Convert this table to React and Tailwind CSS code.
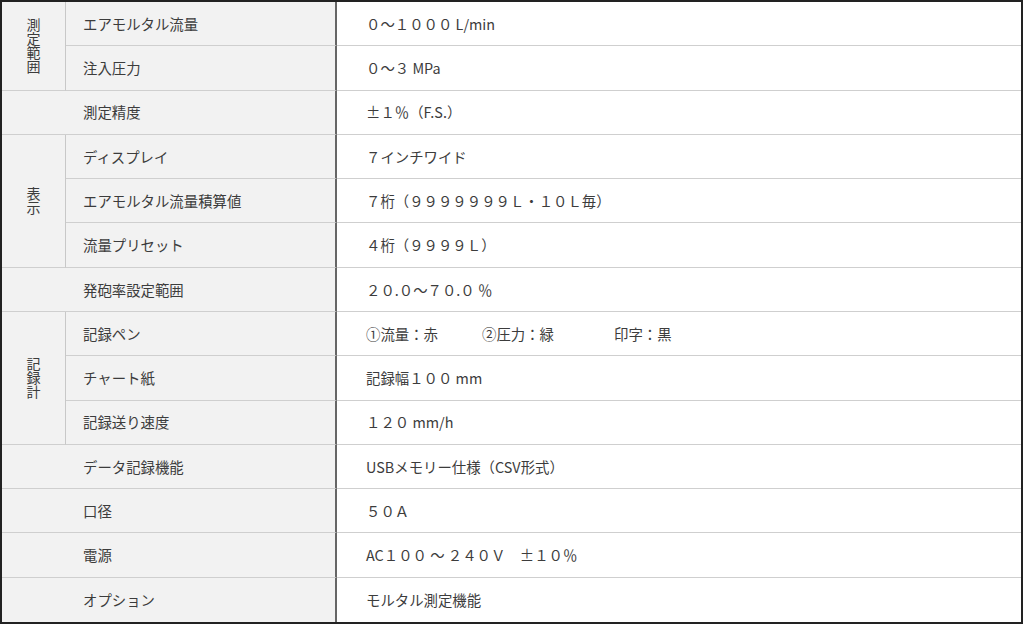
const rows = [
  { group: "測定範囲", span: 2, label: "エアモルタル流量", value: "０～１０００ L/min" },
  { label: "注入圧力", value: "０～３ MPa" },
  { label: "測定精度", value: "±１％（F.S.）", wide: true },
  { group: "表示", span: 3, label: "ディスプレイ", value: "７インチワイド" },
  { label: "エアモルタル流量積算値", value: "７桁（９９９９９９９Ｌ・１０Ｌ毎）" },
  { label: "流量プリセット", value: "４桁（９９９９Ｌ）" },
  { label: "発砲率設定範囲", value: "２０.０～７０.０ ％", wide: true },
  { group: "記録計", span: 3, label: "記録ペン", pens: true },
  { label: "チャート紙", value: "記録幅１００ mm" },
  { label: "記録送り速度", value: "１２０ mm/h" },
  { label: "データ記録機能", value: "USBメモリー仕様（CSV形式）", wide: true },
  { label: "口径", value: "５０Ａ", wide: true },
  { label: "電源", value: "AC１００ ～ ２４０Ｖ　±１０％", wide: true },
  { label: "オプション", value: "モルタル測定機能", wide: true },
];

const rowStart = [
  "row-start-1", "row-start-2", "row-start-3", "row-start-4", "row-start-5",
  "row-start-6", "row-start-7", "row-start-8", "row-start-9", "row-start-10",
  "row-start-11", "row-start-12", "row-start-13", "row-start-14",
];
const rowSpan = { 2: "row-span-2", 3: "row-span-3" };

export default function App() {
  return (
    <div className="w-[1024px] h-[625px] bg-white">
      <div
        className="w-[1023px] h-[624px] border-2 border-[#222] grid grid-cols-[64px_271px_1fr] grid-rows-[repeat(14,minmax(0,1fr))] text-[14.4px] text-[#3c3c3c]"
        style={{ fontFamily: '"Noto Sans CJK JP", "Noto Sans", sans-serif' }}
      >
        {rows.map((r, i) => {
          const last = i === rows.length - 1;
          const line = last ? "" : "border-b border-b-[#cfcfcf]";
          return [
            r.group && (
              <div
                key={"g" + i}
                className={`col-start-1 ${rowStart[i]} ${rowSpan[r.span]} bg-[#f2f2f2] border-r border-r-[#c8c8c8] border-b border-b-[#cfcfcf] flex items-center justify-center`}
              >
                {/* vertical group label */}
                <span className="[writing-mode:vertical-rl] text-[14px] leading-[18px]">
                  {r.group}
                </span>
              </div>
            ),
            <div
              key={"l" + i}
              className={`${r.wide ? "col-start-1 col-span-2 pl-[81px]" : "col-start-2 pl-[17px]"} ${rowStart[i]} bg-[#f2f2f2] border-r-2 border-r-[#666] ${line} flex items-center`}
            >
              {r.label}
            </div>,
            <div
              key={"v" + i}
              className={`col-start-3 ${rowStart[i]} bg-white pl-[29px] ${line} flex items-center`}
            >
              {r.pens ? (
                <>
                  <span className="w-[116px]">①流量：赤</span>
                  <span className="w-[132px]">②圧力：緑</span>
                  <span>印字：黒</span>
                </>
              ) : (
                r.value
              )}
            </div>,
          ];
        })}
      </div>
    </div>
  );
}
